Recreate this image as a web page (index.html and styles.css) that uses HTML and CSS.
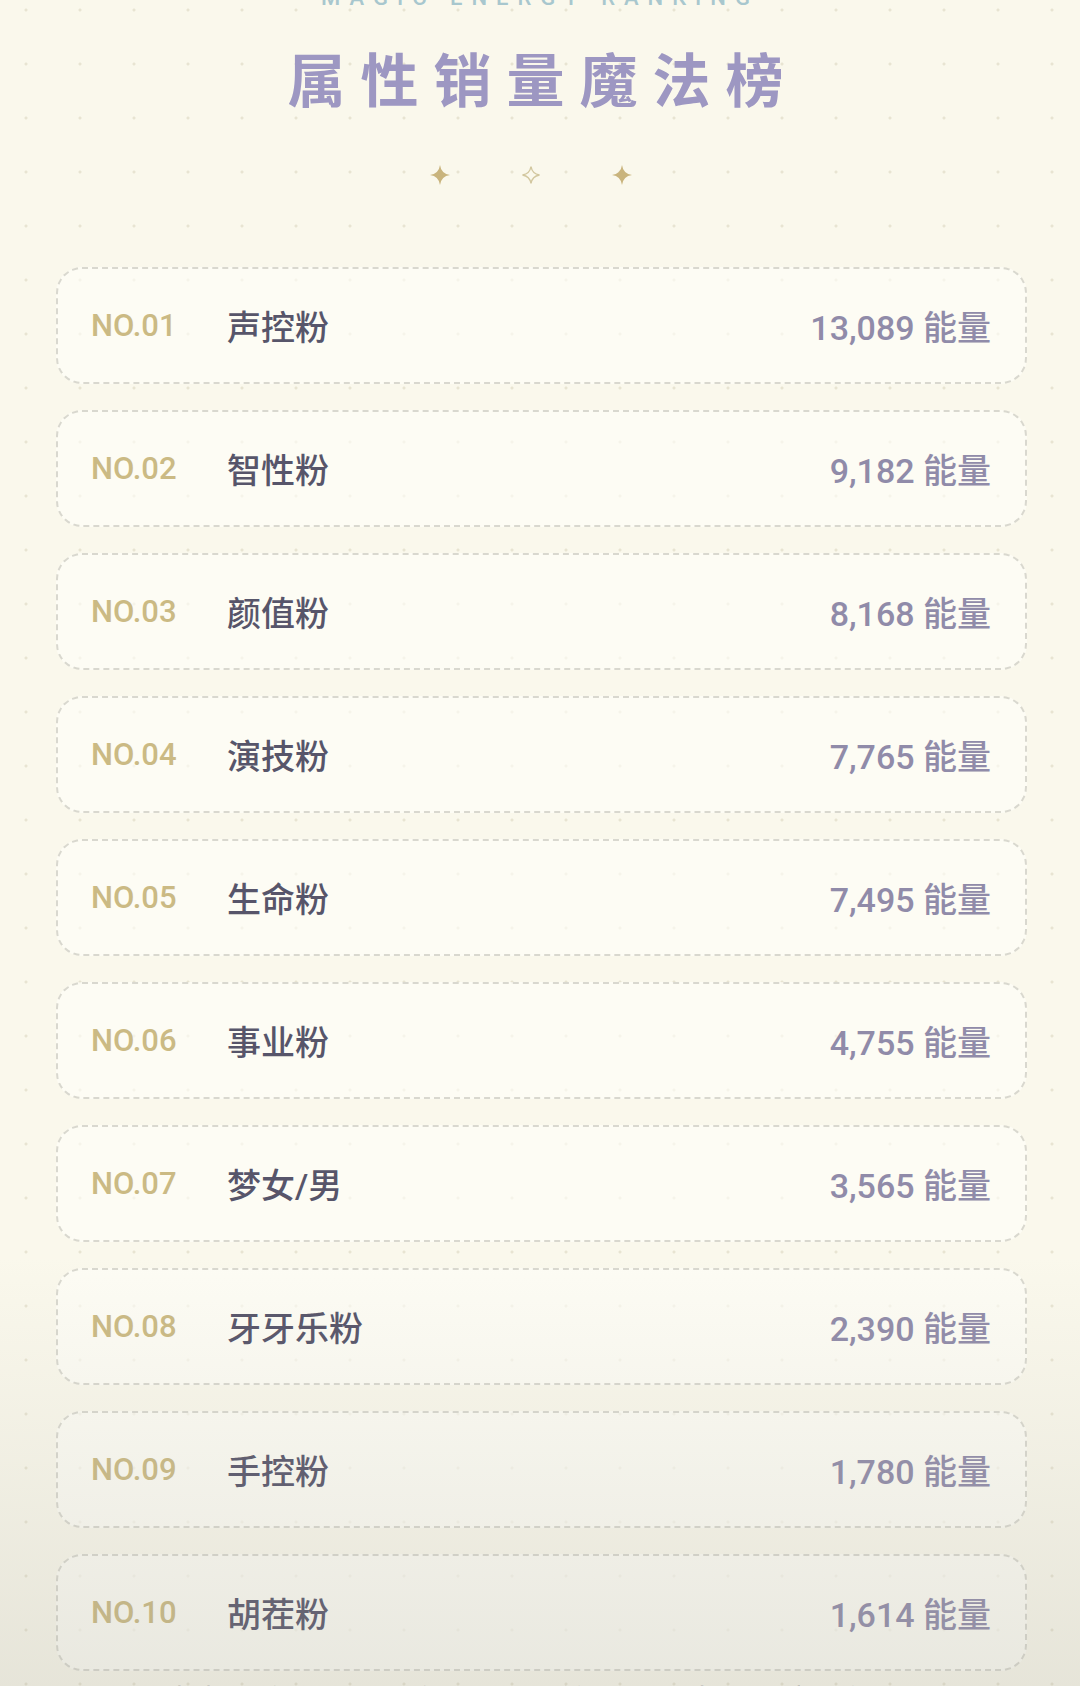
FILE: index.html
```html
<!DOCTYPE html>
<html lang="zh-CN">
<head>
<meta charset="utf-8">
<title>属性销量魔法榜</title>
<link rel="stylesheet" href="styles.css">
</head>
<body>
<main class="page">
  <header class="header">
    <div class="subtitle">MAGIC ENERGY RANKING</div>
    <h1 class="title">属性销量魔法榜</h1>
    <div class="stars">
      <svg class="star" viewBox="0 0 20 20"><path d="M10 0 Q11.2 8.8 20 10 Q11.2 11.2 10 20 Q8.8 11.2 0 10 Q8.8 8.8 10 0Z" fill="#c9b47d"/></svg>
      <svg class="star" viewBox="0 0 20 20"><path d="M10 1.5 Q11.2 8.8 18.5 10 Q11.2 11.2 10 18.5 Q8.8 11.2 1.5 10 Q8.8 8.8 10 1.5Z" fill="none" stroke="#d2c79f" stroke-width="1.4"/></svg>
      <svg class="star" viewBox="0 0 20 20"><path d="M10 0 Q11.2 8.8 20 10 Q11.2 11.2 10 20 Q8.8 11.2 0 10 Q8.8 8.8 10 0Z" fill="#c9b47d"/></svg>
    </div>
  </header>

  <ol class="ranking">
    <li class="row"><span class="no">NO.01</span><span class="name">声控粉</span><span class="value">13,089 能量</span></li>
    <li class="row"><span class="no">NO.02</span><span class="name">智性粉</span><span class="value">9,182 能量</span></li>
    <li class="row"><span class="no">NO.03</span><span class="name">颜值粉</span><span class="value">8,168 能量</span></li>
    <li class="row"><span class="no">NO.04</span><span class="name">演技粉</span><span class="value">7,765 能量</span></li>
    <li class="row"><span class="no">NO.05</span><span class="name">生命粉</span><span class="value">7,495 能量</span></li>
    <li class="row"><span class="no">NO.06</span><span class="name">事业粉</span><span class="value">4,755 能量</span></li>
    <li class="row"><span class="no">NO.07</span><span class="name">梦女/男</span><span class="value">3,565 能量</span></li>
    <li class="row"><span class="no">NO.08</span><span class="name">牙牙乐粉</span><span class="value">2,390 能量</span></li>
    <li class="row"><span class="no">NO.09</span><span class="name">手控粉</span><span class="value">1,780 能量</span></li>
    <li class="row"><span class="no">NO.10</span><span class="name">胡茬粉</span><span class="value">1,614 能量</span></li>
  </ol>

  <p class="caption">数据更新至 2024 年 8 月 · 统计周期内累计魔法能量</p>
  <div class="shade"></div>
</main>
</body>
</html>
```
FILE: styles.css
```css
* { box-sizing: border-box; }

html, body {
  margin: 0;
  padding: 0;
}

body {
  width: 1080px;
  height: 1686px;
  overflow: hidden;
  background-color: #faf8ec;
  background-image: radial-gradient(circle at 27px 27px, #e8e4d2 0, #e8e4d2 1.1px, rgba(232,228,210,0) 1.9px);
  background-size: 54px 54px;
  background-position: -1px -17px;
  font-family: Roboto, "Noto Sans CJK SC", sans-serif;
}

.page {
  position: relative;
  height: 1686px;
}

.header {
  display: flex;
  flex-direction: column;
  align-items: center;
}

.subtitle {
  margin-top: -13px;
  font-family: Roboto, sans-serif;
  font-size: 22px;
  line-height: 22px;
  font-weight: 500;
  letter-spacing: 9px;
  color: #a8c7ce;
}

.title {
  margin: 39px 0 0 0;
  padding-left: 6px;
  font-family: "Noto Sans CJK SC", sans-serif;
  font-size: 58px;
  line-height: 58px;
  font-weight: 700;
  letter-spacing: 15px;
  color: #9d97c2;
}

.stars {
  margin-top: 59px;
  display: flex;
  justify-content: center;
  gap: 71px;
  padding-right: 18px;
  height: 20px;
}

.star {
  width: 20px;
  height: 20px;
  display: block;
}

.ranking {
  list-style: none;
  margin: 82px 53px 0 56px;
  padding: 0;
  display: flex;
  flex-direction: column;
  gap: 26px;
}

.row {
  height: 117px;
  display: flex;
  align-items: center;
  padding: 0 34px 0 33px;
  border: 2px dashed #d9d8cf;
  border-radius: 26px;
  background: rgba(255, 255, 250, 0.6);
}

.no {
  width: 136px;
  flex: none;
  font-family: Roboto, sans-serif;
  font-size: 31px;
  font-weight: 500;
  color: #cbba84;
}

.name {
  flex: 1;
  font-family: Roboto, "Noto Sans CJK SC", sans-serif;
  font-size: 34px;
  font-weight: 500;
  color: #57556a;
}

.value {
  flex: none;
  font-family: Roboto, "Noto Sans CJK SC", sans-serif;
  font-size: 34px;
  font-weight: 500;
  color: #908ba9;
}

.caption {
  margin: 8px 0 0 0;
  text-align: center;
  font-family: "Noto Sans CJK SC", sans-serif;
  font-size: 32px;
  line-height: 40px;
  color: #6c6a72;
}

.shade {
  position: absolute;
  left: 0;
  right: 0;
  bottom: 0;
  height: 430px;
  pointer-events: none;
  background: linear-gradient(to bottom, rgba(170, 170, 160, 0) 0%, rgba(170, 170, 160, 0.12) 50%, rgba(160, 160, 150, 0.22) 100%);
}
```
